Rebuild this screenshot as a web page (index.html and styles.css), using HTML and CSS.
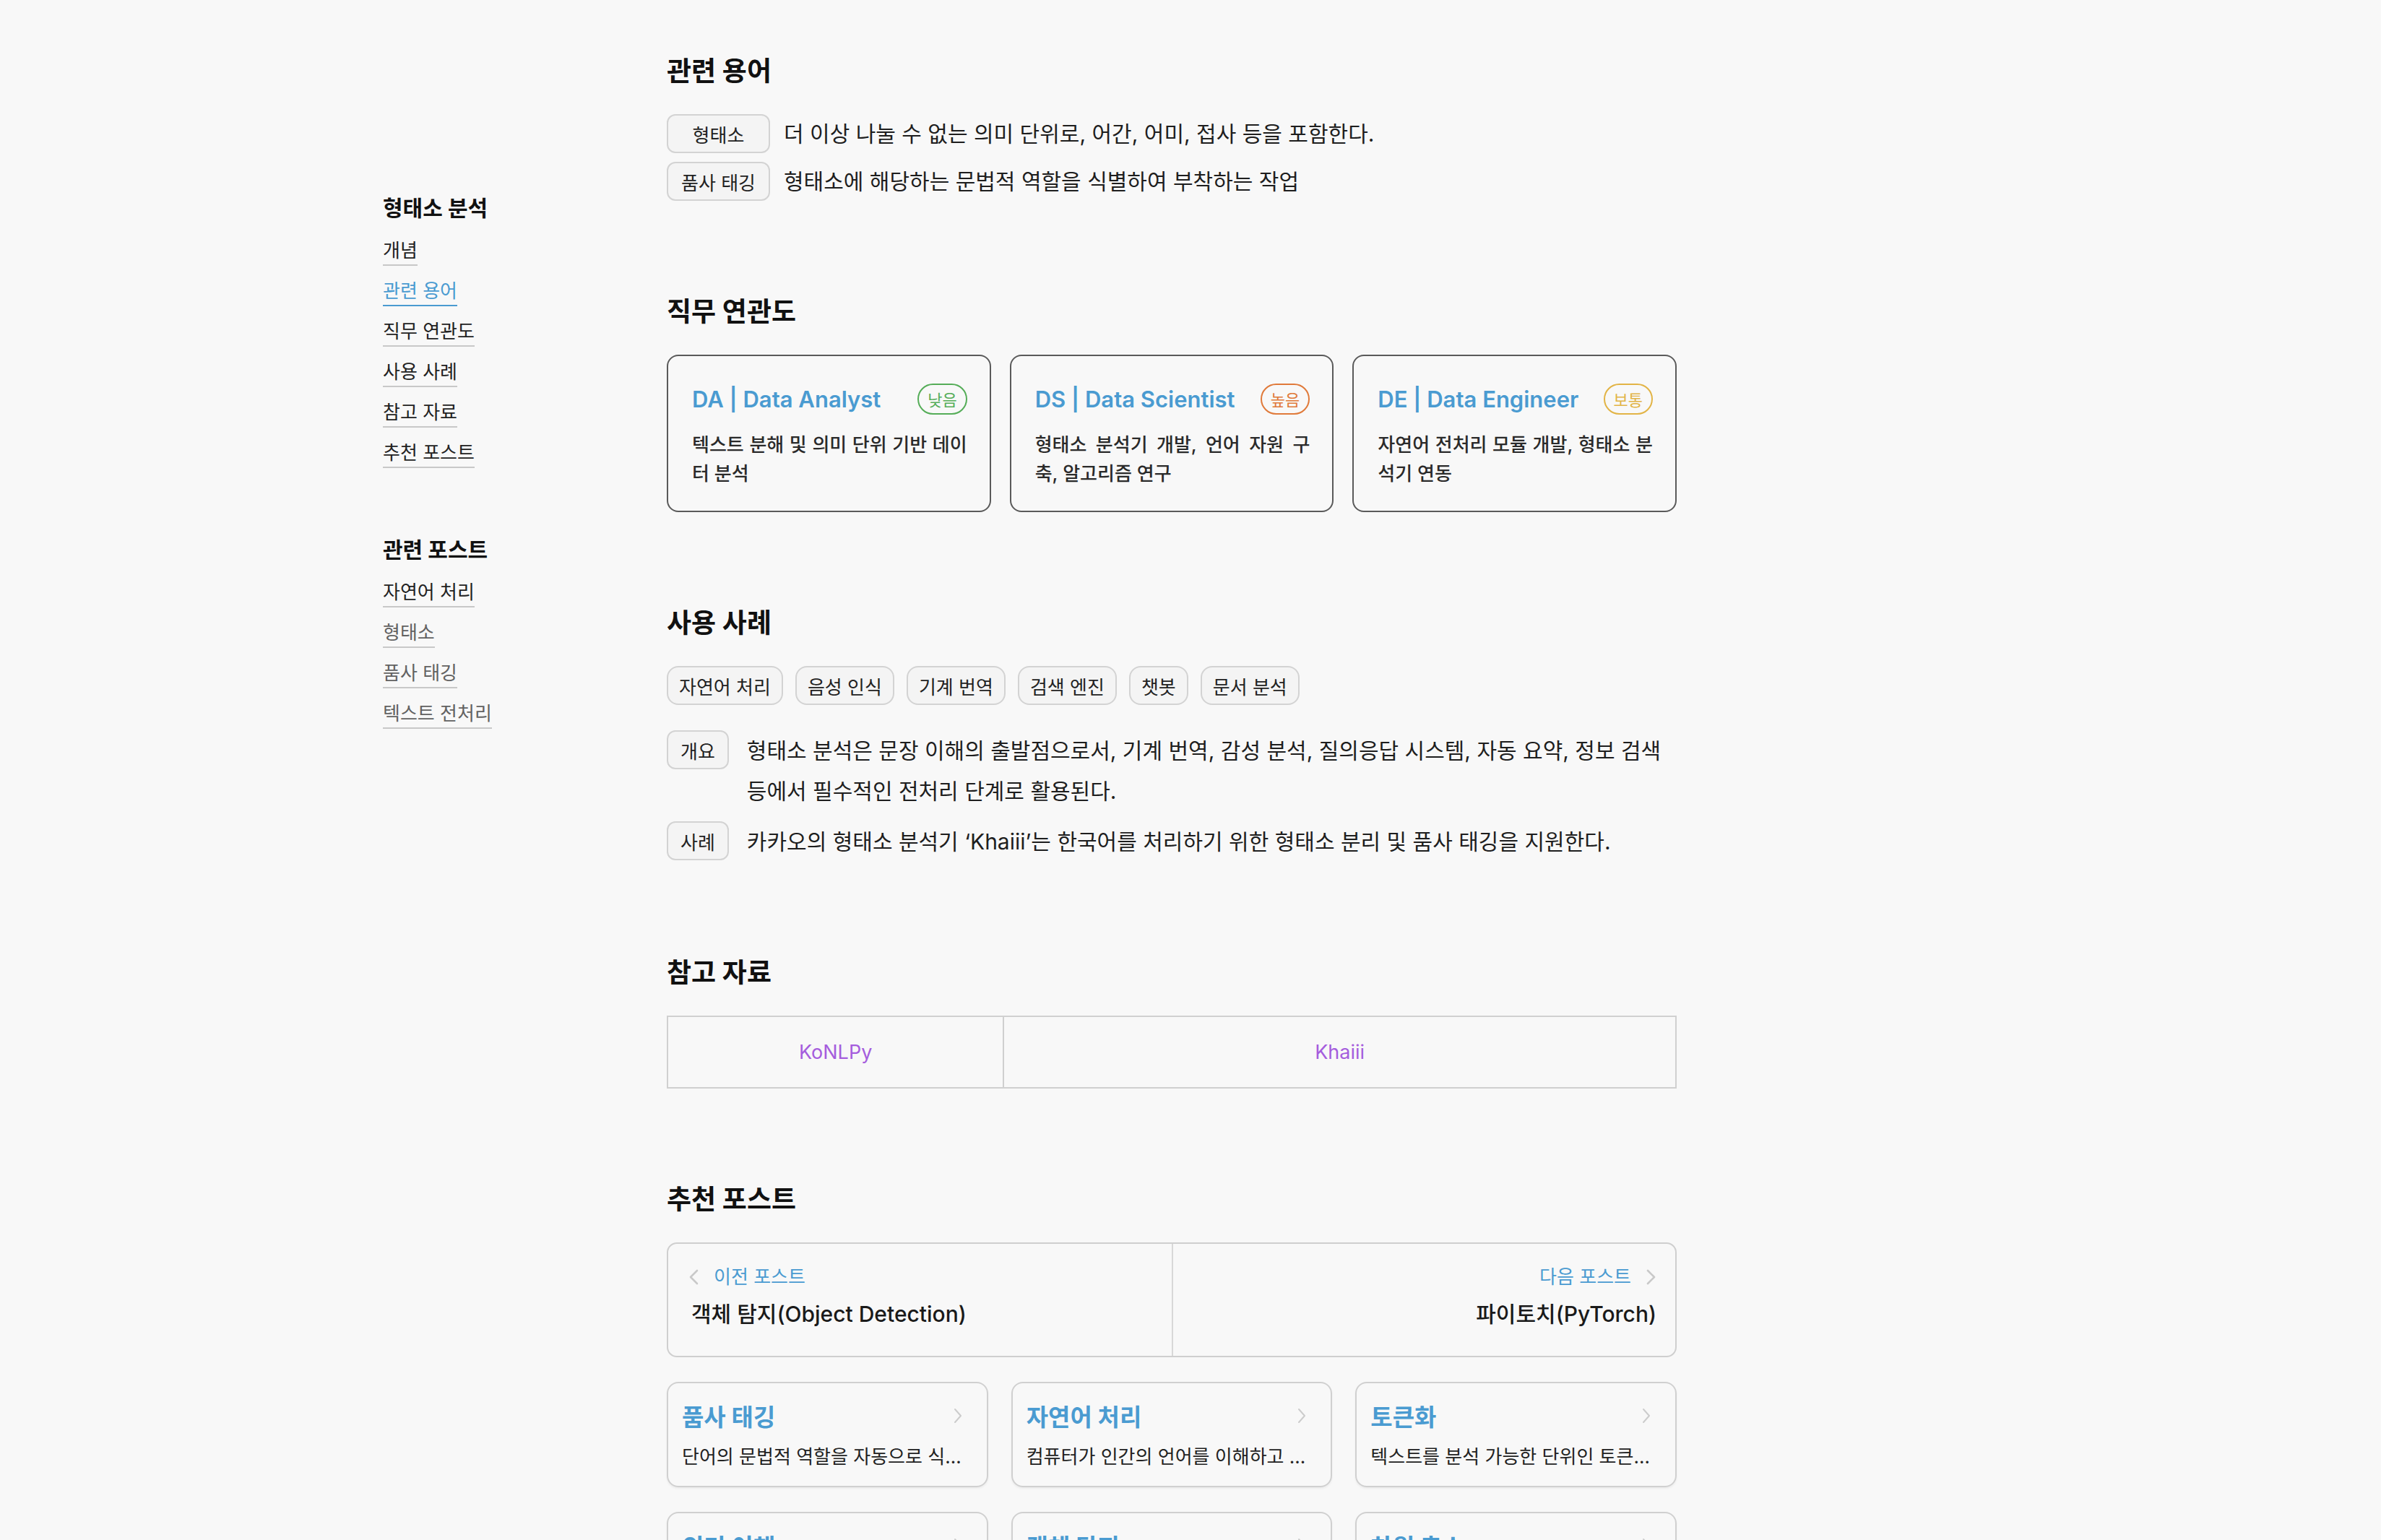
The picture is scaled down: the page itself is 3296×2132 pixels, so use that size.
FILE: index.html
```html
<!DOCTYPE html>
<html lang="ko">
<head>
<meta charset="utf-8">
<title>형태소 분석</title>
<link rel="stylesheet" href="styles.css">
</head>
<body>
<div class="page">
  <aside class="sidebar">
    <nav class="toc">
      <h3 class="toc-title">형태소 분석</h3>
      <ul class="toc-list">
        <li><a class="toc-link">개념</a></li>
        <li><a class="toc-link is-active">관련 용어</a></li>
        <li><a class="toc-link">직무 연관도</a></li>
        <li><a class="toc-link">사용 사례</a></li>
        <li><a class="toc-link">참고 자료</a></li>
        <li><a class="toc-link">추천 포스트</a></li>
      </ul>
    </nav>
    <nav class="toc">
      <h3 class="toc-title">관련 포스트</h3>
      <ul class="toc-list">
        <li><a class="toc-link">자연어 처리</a></li>
        <li><a class="toc-link is-muted">형태소</a></li>
        <li><a class="toc-link is-muted">품사 태깅</a></li>
        <li><a class="toc-link is-muted">텍스트 전처리</a></li>
      </ul>
    </nav>
  </aside>

  <main class="content">
    <section class="section">
      <h2 class="section-title">관련 용어</h2>
      <ul class="terms">
        <li class="term"><span class="term-badge">형태소</span><span class="term-desc">더 이상 나눌 수 없는 의미 단위로, 어간, 어미, 접사 등을 포함한다.</span></li>
        <li class="term"><span class="term-badge">품사 태깅</span><span class="term-desc">형태소에 해당하는 문법적 역할을 식별하여 부착하는 작업</span></li>
      </ul>
    </section>

    <section class="section">
      <h2 class="section-title">직무 연관도</h2>
      <div class="roles">
        <article class="role-card">
          <div class="role-head"><span class="role-name">DA | Data Analyst</span><span class="level level-low">낮음</span></div>
          <p class="role-desc">텍스트 분해 및 의미 단위 기반 데이터 분석</p>
        </article>
        <article class="role-card">
          <div class="role-head"><span class="role-name">DS | Data Scientist</span><span class="level level-high">높음</span></div>
          <p class="role-desc">형태소 분석기 개발, 언어 자원 구축, 알고리즘 연구</p>
        </article>
        <article class="role-card">
          <div class="role-head"><span class="role-name">DE | Data Engineer</span><span class="level level-mid">보통</span></div>
          <p class="role-desc">자연어 전처리 모듈 개발, 형태소 분석기 연동</p>
        </article>
      </div>
    </section>

    <section class="section">
      <h2 class="section-title">사용 사례</h2>
      <ul class="tags">
        <li class="tag">자연어 처리</li>
        <li class="tag">음성 인식</li>
        <li class="tag">기계 번역</li>
        <li class="tag">검색 엔진</li>
        <li class="tag">챗봇</li>
        <li class="tag">문서 분석</li>
      </ul>
      <div class="notes">
        <div class="note"><span class="note-badge">개요</span><p class="note-text">형태소 분석은 문장 이해의 출발점으로서, 기계 번역, 감성 분석, 질의응답 시스템, 자동 요약, 정보 검색 등에서 필수적인 전처리 단계로 활용된다.</p></div>
        <div class="note"><span class="note-badge">사례</span><p class="note-text">카카오의 형태소 분석기 ‘Khaiii’는 한국어를 처리하기 위한 형태소 분리 및 품사 태깅을 지원한다.</p></div>
      </div>
    </section>

    <section class="section">
      <h2 class="section-title">참고 자료</h2>
      <table class="refs">
        <colgroup><col class="refs-col-a"><col class="refs-col-b"></colgroup>
        <tr><td><a class="ref-link">KoNLPy</a></td><td><a class="ref-link">Khaiii</a></td></tr>
      </table>
    </section>

    <section class="section">
      <h2 class="section-title">추천 포스트</h2>
      <div class="pager">
        <a class="pager-item pager-prev">
          <span class="pager-label"><svg class="chev" width="14" height="22" viewBox="0 0 14 22"><polyline points="12,2 3,11 12,20" fill="none" stroke="#c9c9c9" stroke-width="2.6" stroke-linecap="round" stroke-linejoin="round"/></svg>이전 포스트</span>
          <span class="pager-title">객체 탐지(Object Detection)</span>
        </a>
        <a class="pager-item pager-next">
          <span class="pager-label">다음 포스트<svg class="chev" width="14" height="22" viewBox="0 0 14 22"><polyline points="2,2 11,11 2,20" fill="none" stroke="#c9c9c9" stroke-width="2.6" stroke-linecap="round" stroke-linejoin="round"/></svg></span>
          <span class="pager-title">파이토치(PyTorch)</span>
        </a>
      </div>
      <div class="posts">
        <a class="post-card">
          <div class="post-head"><span class="post-title">품사 태깅</span><svg class="post-chev" width="13" height="22" viewBox="0 0 13 22"><polyline points="2,2 10,11 2,20" fill="none" stroke="#cccccc" stroke-width="2" stroke-linecap="round" stroke-linejoin="round"/></svg></div>
          <p class="post-desc">단어의 문법적 역할을 자동으로 식별하는 작업</p>
        </a>
        <a class="post-card">
          <div class="post-head"><span class="post-title">자연어 처리</span><svg class="post-chev" width="13" height="22" viewBox="0 0 13 22"><polyline points="2,2 10,11 2,20" fill="none" stroke="#cccccc" stroke-width="2" stroke-linecap="round" stroke-linejoin="round"/></svg></div>
          <p class="post-desc">컴퓨터가 인간의 언어를 이해하고 처리하는 기술</p>
        </a>
        <a class="post-card">
          <div class="post-head"><span class="post-title">토큰화</span><svg class="post-chev" width="13" height="22" viewBox="0 0 13 22"><polyline points="2,2 10,11 2,20" fill="none" stroke="#cccccc" stroke-width="2" stroke-linecap="round" stroke-linejoin="round"/></svg></div>
          <p class="post-desc">텍스트를 분석 가능한 단위인 토큰으로 나누는 과정</p>
        </a>
        <a class="post-card">
          <div class="post-head"><span class="post-title">의미 이해</span><svg class="post-chev" width="13" height="22" viewBox="0 0 13 22"><polyline points="2,2 10,11 2,20" fill="none" stroke="#cccccc" stroke-width="2" stroke-linecap="round" stroke-linejoin="round"/></svg></div>
          <p class="post-desc">문장과 단어가 가진 의미를 파악하는 과정</p>
        </a>
        <a class="post-card">
          <div class="post-head"><span class="post-title">객체 탐지</span><svg class="post-chev" width="13" height="22" viewBox="0 0 13 22"><polyline points="2,2 10,11 2,20" fill="none" stroke="#cccccc" stroke-width="2" stroke-linecap="round" stroke-linejoin="round"/></svg></div>
          <p class="post-desc">이미지 속 객체의 위치와 종류를 찾아내는 기술</p>
        </a>
        <a class="post-card">
          <div class="post-head"><span class="post-title">차원 축소</span><svg class="post-chev" width="13" height="22" viewBox="0 0 13 22"><polyline points="2,2 10,11 2,20" fill="none" stroke="#cccccc" stroke-width="2" stroke-linecap="round" stroke-linejoin="round"/></svg></div>
          <p class="post-desc">고차원 데이터를 저차원으로 변환하는 기법</p>
        </a>
      </div>
    </section>
  </main>
</div>
</body>
</html>
```

FILE: styles.css
```css
* { box-sizing: border-box; }

html, body {
  margin: 0;
  background: #f8f8f8;
}

body {
  font-family: Inter, "Noto Sans CJK KR", "Noto Sans", sans-serif;
  color: #1a1a1a;
}

a { text-decoration: none; color: inherit; }

.page {
  display: flex;
  align-items: flex-start;
  padding-left: 530px;
}

/* ---------- sidebar ---------- */
.sidebar {
  width: 393px;
  flex-shrink: 0;
  padding-top: 269px;
}

.toc + .toc { margin-top: 94px; }

.toc-title {
  margin: 0 0 24px;
  font-size: 30px;
  line-height: 38px;
  font-weight: 700;
  color: #111;
}

.toc-list {
  list-style: none;
  margin: 0;
  padding: 0;
  display: flex;
  flex-direction: column;
  align-items: flex-start;
  gap: 19px;
}

.toc-link {
  display: inline-block;
  font-size: 26px;
  line-height: 32px;
  padding-bottom: 3px;
  border-bottom: 2px solid #c8c8c8;
  color: #222;
}

.toc-link.is-active {
  color: #4a9bd1;
  border-bottom-color: #4a9bd1;
}

.toc-link.is-muted { color: #626262; }

/* ---------- content ---------- */
.content {
  width: 1398px;
  flex-shrink: 0;
  padding-top: 77px;
  padding-bottom: 200px;
}

.section + .section { margin-top: 132px; }

.section-title {
  margin: 0 0 37px;
  font-size: 37px;
  line-height: 44px;
  font-weight: 700;
  color: #111;
}

/* terms */
.terms {
  list-style: none;
  margin: 0;
  padding: 0;
  display: flex;
  flex-direction: column;
  gap: 12px;
}

.term {
  display: flex;
  align-items: center;
  gap: 19px;
}

.term-badge,
.tag,
.note-badge {
  display: flex;
  align-items: center;
  justify-content: center;
  height: 54px;
  border: 2px solid #d3d3d3;
  background: #f4f4f4;
  font-size: 26px;
  color: #222;
  flex-shrink: 0;
}

.term-badge {
  width: 143px;
  border-radius: 12px;
}

.term-desc {
  font-size: 30px;
  line-height: 40px;
  color: #1e1e1e;
}

/* roles */
.roles {
  display: grid;
  grid-template-columns: repeat(3, minmax(0, 1fr));
  gap: 26px;
}

.role-card {
  border: 2px solid #5a5a5a;
  border-radius: 16px;
  padding: 37px 31px 31px 33px;
}

.role-head {
  display: flex;
  justify-content: space-between;
  align-items: center;
  height: 44px;
}

.role-name {
  font-size: 31px;
  font-weight: 600;
  color: #4a9bd1;
}

.level {
  display: flex;
  align-items: center;
  height: 43px;
  padding: 0 12px;
  border: 2px solid currentColor;
  border-radius: 999px;
  font-size: 22px;
}

.level-low { color: #55ad58; }
.level-high { color: #e07a3a; }
.level-mid { color: #e2b446; }

.role-desc {
  margin: 22px 0 0;
  font-size: 26px;
  line-height: 40px;
  font-weight: 500;
  color: #2a2a2a;
  text-align: justify;
}

/* usage */
.tags {
  list-style: none;
  margin: 0;
  padding: 0;
  display: flex;
  flex-wrap: wrap;
  gap: 17px;
}

.tag {
  padding: 0 15px;
  border-radius: 16px;
}

.notes {
  margin-top: 35px;
  display: flex;
  flex-direction: column;
  gap: 14px;
}

.note {
  display: flex;
  align-items: flex-start;
  gap: 25px;
}

.note-badge {
  padding: 0 17px;
  border-radius: 12px;
}

.note-text {
  margin: 0;
  font-size: 30px;
  line-height: 56px;
  color: #1e1e1e;
}

/* references */
.refs {
  width: 100%;
  border-collapse: collapse;
  table-layout: fixed;
}

.refs-col-a { width: 33.333%; }

.refs td {
  height: 99px;
  border: 2px solid #d0d0d0;
  text-align: center;
  vertical-align: middle;
  padding: 0;
}

.ref-link {
  font-size: 27px;
  color: #a55ddd;
}

/* pager */
.pager {
  display: grid;
  grid-template-columns: repeat(2, minmax(0, 1fr));
  height: 159px;
  border: 2px solid #cfcfcf;
  border-radius: 14px;
}

.pager-item {
  display: flex;
  flex-direction: column;
  gap: 14px;
  padding: 29px 26px 0 28px;
}

.pager-next {
  align-items: flex-end;
  border-left: 2px solid #d8d8d8;
}

.pager-label {
  display: flex;
  align-items: center;
  gap: 21px;
  font-size: 26px;
  line-height: 34px;
  color: #4a9bd1;
}

.pager-title {
  font-size: 30px;
  line-height: 40px;
  font-weight: 500;
  color: #1a1a1a;
}

.pager-prev .pager-title { padding-left: 4px; }

/* post cards */
.posts {
  margin-top: 34px;
  display: grid;
  grid-template-columns: repeat(3, minmax(0, 1fr));
  gap: 34px 32px;
}

.post-card {
  display: block;
  min-width: 0;
  height: 146px;
  padding: 25px 33px 0 19px;
  border: 2px solid #d0d0d0;
  border-radius: 16px;
  box-shadow: 0 2px 3px rgba(0, 0, 0, 0.05);
}

.post-head {
  display: flex;
  justify-content: space-between;
  align-items: center;
  height: 40px;
}

.post-title {
  font-size: 33px;
  font-weight: 700;
  color: #4a9bd1;
}

.post-desc {
  margin: 20px 0 0;
  font-size: 26px;
  line-height: 34px;
  color: #222;
  white-space: nowrap;
  overflow: hidden;
  text-overflow: ellipsis;
}
```
